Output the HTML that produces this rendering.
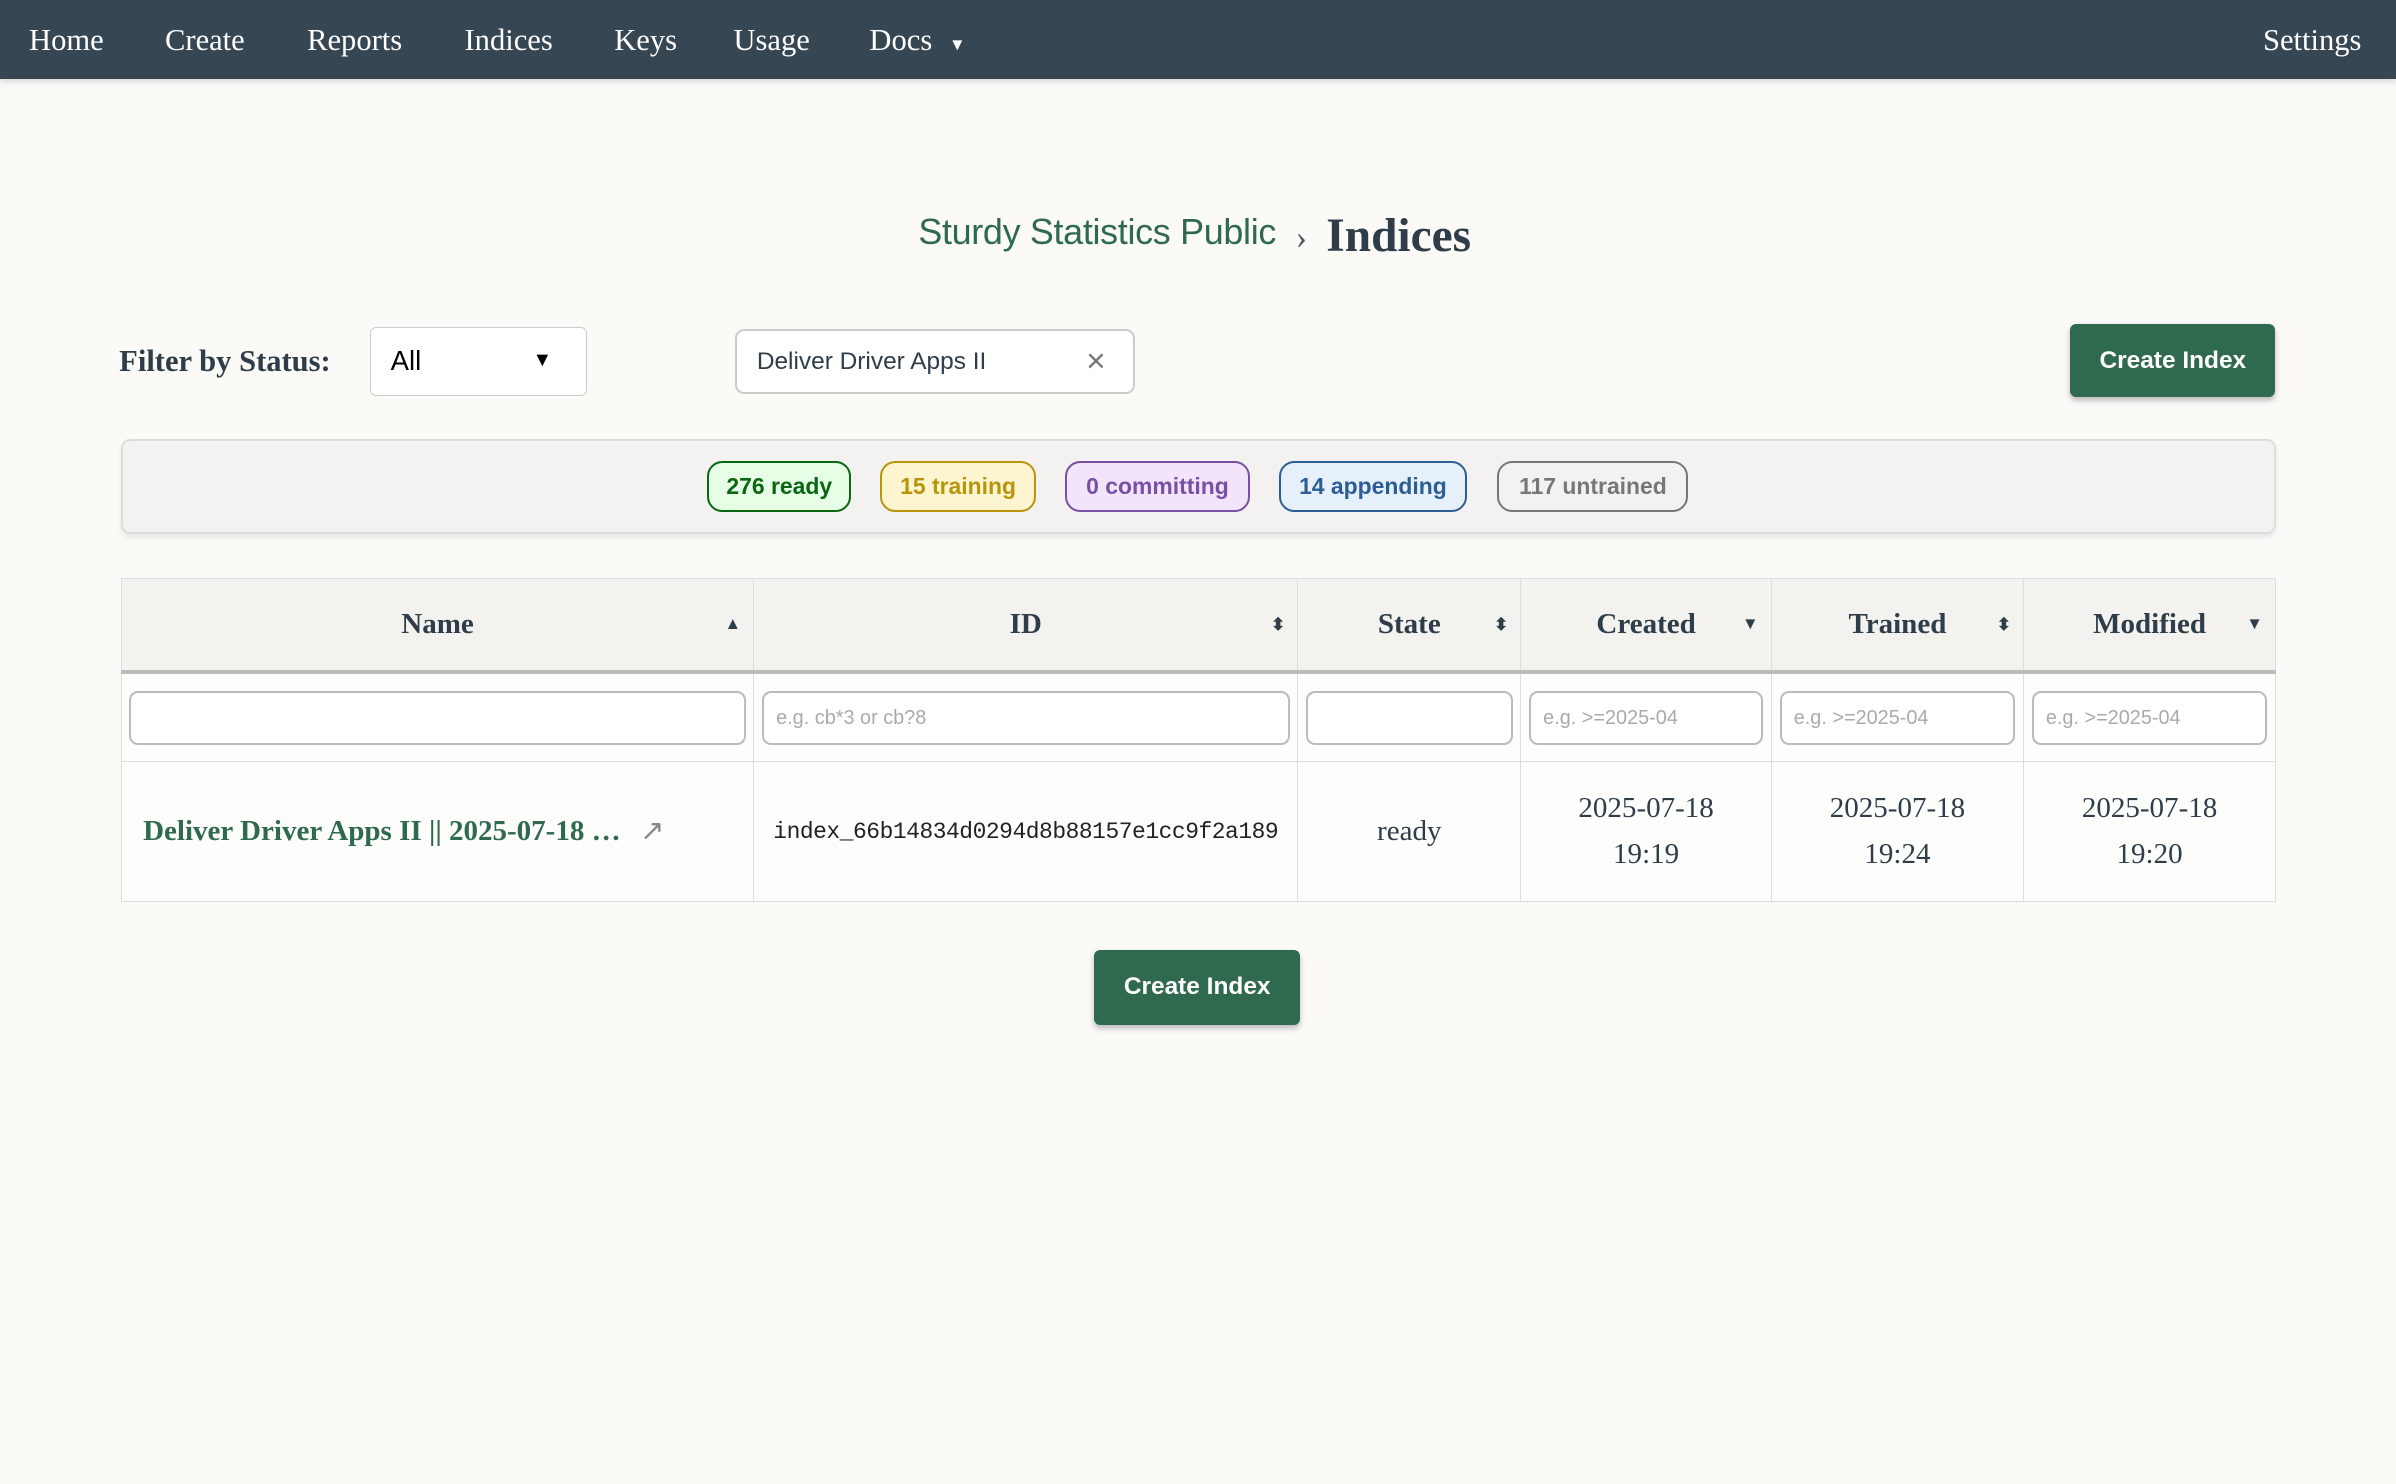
<!DOCTYPE html>
<html><head><meta charset="utf-8"><style>
html,body{margin:0;padding:0;background:#fbfaf7;}
body{zoom:1.528;width:1568px;height:971px;position:relative;overflow:hidden;font-family:"Liberation Serif",serif;color:#2e3d49;}
.nav{position:absolute;left:0;top:0;width:1568px;height:52px;background:#374653;box-shadow:0 2px 4px rgba(0,0,0,.15);}
.nav span{position:absolute;top:15px;color:#fff;font-size:20px;}
.abs{position:absolute;}
.sans{font-family:"Liberation Sans",sans-serif;}
.badge{position:absolute;top:302px;height:33px;border:1.5px solid;border-radius:10px;font:bold 15px/31px "Liberation Sans",sans-serif;text-align:center;box-sizing:border-box;}
.btn{position:absolute;background:#2f6a4f;color:#fff;border-radius:4px;font:bold 16px "Liberation Sans",sans-serif;text-align:center;box-shadow:0 2px 4px rgba(0,0,0,.25);}
table{position:absolute;left:79px;top:378px;width:1410px;border-collapse:collapse;border:1px solid #ddd;table-layout:fixed;}
th{background:#f3f2ef;height:60px;padding:0;font-size:19px;font-weight:bold;border-right:1px solid #ddd;border-bottom:3px solid #bbb;position:relative;}
td{border-right:1px solid #ddd;border-bottom:1px solid #ddd;background:#fdfdfc;text-align:center;padding:0;}
.f td{height:57px;}
.f div{margin:0 5px;height:33px;border:1.5px solid #bbb;border-radius:6px;background:#fff;text-align:left;font:13px/33px "Liberation Sans",sans-serif;color:#aaa;padding-left:8px;}
.r td{height:91px;font-size:19px;line-height:30px;}
.ar{position:absolute;right:8px;top:23px;font-size:11px;}
</style></head><body>
<div class="nav">
<span style="left:19px">Home</span><span style="left:108px">Create</span><span style="left:201px">Reports</span><span style="left:304px">Indices</span><span style="left:402px">Keys</span><span style="left:480px">Usage</span><span style="left:569px">Docs <small style="font-size:11px;margin-left:6px">▼</small></span><span style="left:1481px">Settings</span>
</div>
<div class="abs sans" style="left:601px;top:139px;font-size:23.5px;color:#2f6a4f;letter-spacing:-0.2px">Sturdy Statistics Public</div>
<div class="abs" style="left:848px;top:143px;font-size:22px;color:#555">›</div>
<div class="abs" style="left:868px;top:137px;font-size:31px;font-weight:bold;color:#2e3d49">Indices</div>
<div class="abs" style="left:78px;top:225px;font-size:20px;font-weight:bold">Filter by Status:</div>
<div class="abs sans" style="left:242px;top:214px;width:142px;height:45px;border:1px solid #ccc;border-radius:4px;background:#fff;font-size:18px;line-height:43px;box-sizing:border-box;padding-left:13px;color:#000">All<span style="position:absolute;right:22px;font-size:13px">▼</span></div>
<div class="abs sans" style="left:481px;top:215px;width:262px;height:43px;border:1.5px solid #ccc;border-radius:6px;background:#fff;font-size:16px;line-height:41px;box-sizing:border-box;padding-left:13px;color:#2e3d49">Deliver Driver Apps II<span style="position:absolute;right:18px;font-size:22px;color:#777">×</span></div>
<div class="btn" style="left:1355px;top:212px;width:134px;height:48px;line-height:48px">Create Index</div>
<div class="abs" style="left:79px;top:287px;width:1408px;height:60px;background:#f3f2f0;border:1.5px solid #ddd;border-radius:6px;box-shadow:0 2px 4px rgba(0,0,0,.08)"></div>
<div class="badge" style="left:463px;width:94px;color:#0a6612;border-color:#0a6612;background:#e6fde6">276 ready</div>
<div class="badge" style="left:576px;width:102px;color:#b8950a;border-color:#b8950a;background:#fdf5cf">15 training</div>
<div class="badge" style="left:697px;width:121px;color:#7a4fa6;border-color:#7a4fa6;background:#f1e4fb">0 committing</div>
<div class="badge" style="left:837px;width:123px;color:#2c5e96;border-color:#2c5e96;background:#e6f0fb">14 appending</div>
<div class="badge" style="left:980px;width:125px;color:#777;border-color:#777;background:#f2f2f2">117 untrained</div>
<table>
<colgroup><col style="width:414px"><col style="width:356px"><col style="width:146px"><col style="width:164px"><col style="width:165px"><col style="width:165px"></colgroup>
<tr><th>Name<span class="ar">▲</span></th><th>ID<span class="ar">⬍</span></th><th>State<span class="ar">⬍</span></th><th>Created<span class="ar">▼</span></th><th>Trained<span class="ar">⬍</span></th><th>Modified<span class="ar">▼</span></th></tr>
<tr class="f"><td><div></div></td><td><div>e.g. cb*3 or cb?8</div></td><td><div></div></td><td><div>e.g. &gt;=2025-04</div></td><td><div>e.g. &gt;=2025-04</div></td><td><div>e.g. &gt;=2025-04</div></td></tr>
<tr class="r"><td style="text-align:left;padding-left:14px;color:#2f6a4f;font-weight:bold;white-space:nowrap">Deliver Driver Apps II || 2025-07-18 … <span style="color:#888;font-weight:normal;margin-left:8px">↗</span></td><td style="font:15px 'Liberation Mono',monospace;color:#222;letter-spacing:-0.3px">index_66b14834d0294d8b88157e1cc9f2a189</td><td>ready</td><td>2025-07-18<br>19:19</td><td>2025-07-18<br>19:24</td><td>2025-07-18<br>19:20</td></tr>
</table>
<div class="btn" style="left:716px;top:622px;width:135px;height:49px;line-height:49px">Create Index</div>
</body></html>
